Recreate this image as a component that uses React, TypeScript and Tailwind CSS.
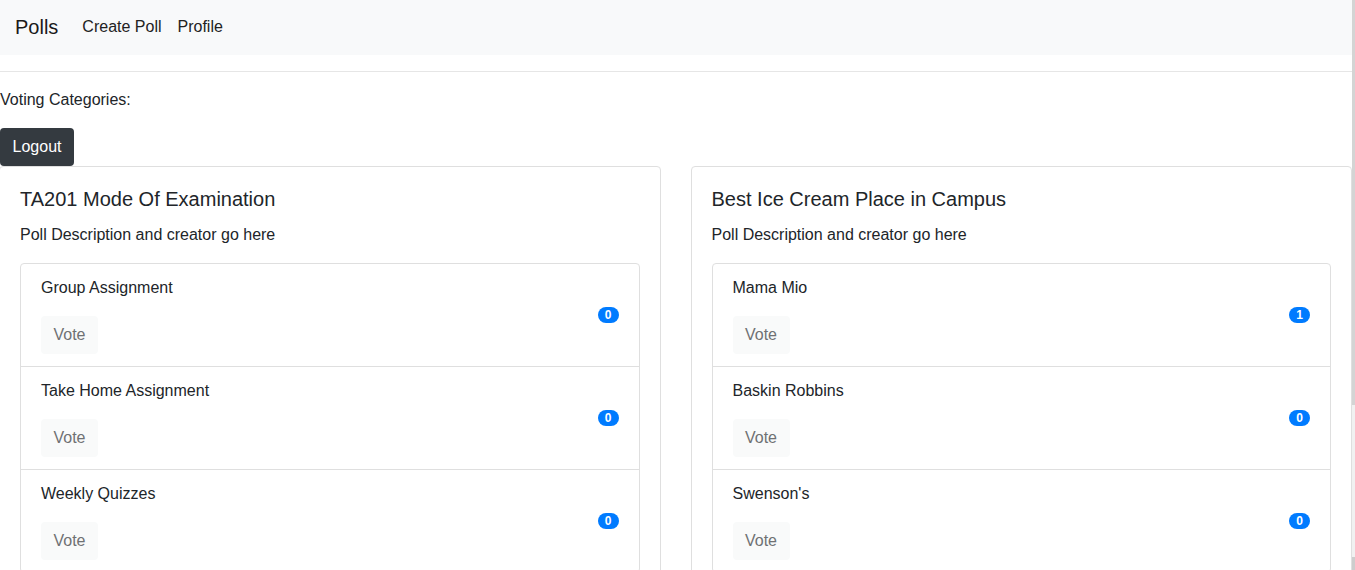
import React from 'react';

type Option = { id: string; name: string; votes: number };
type Poll = { id: string; title: string; description: string; options: Option[] };

const polls: Poll[] = [
  {
    id: '1',
    title: 'TA201 Mode Of Examination',
    description: 'Poll Description and creator go here',
    options: [
      { id: 'a', name: 'Group Assignment', votes: 0 },
      { id: 'b', name: 'Take Home Assignment', votes: 0 },
      { id: 'c', name: 'Weekly Quizzes', votes: 0 }
    ]
  },
  {
    id: '2',
    title: 'Best Ice Cream Place in Campus',
    description: 'Poll Description and creator go here',
    options: [
      { id: 'a', name: 'Mama Mio', votes: 1 },
      { id: 'b', name: 'Baskin Robbins', votes: 0 },
      { id: 'c', name: "Swenson's", votes: 0 }
    ]
  }
];

const PollCard: React.FC<{ poll: Poll }> = ({ poll }) => (
  <div className="border border-[#dfdfdf] rounded-[4px] bg-white">
    <div className="p-5">
      <h5 className="text-[20px] leading-[24px] font-medium mb-3 text-[#212529]">{poll.title}</h5>
      <p className="mb-4 leading-6">{poll.description}</p>
      <ul className="border border-[#dfdfdf] rounded-[4px]">
        {poll.options.map((opt, i) => (
          <li
            key={opt.id}
            className={`flex items-center justify-between px-5 py-3 ${i > 0 ? 'border-t border-[#dfdfdf]' : ''}`}
          >
            <div>
              <p className="leading-6 mb-4">{opt.name}</p>
              <button className="h-[38px] w-[57px] rounded-[4px] bg-[#f9fafa] text-[#6f7173] leading-6">
                Vote
              </button>
            </div>
            <span className="bg-[#007bff] text-white text-[12px] font-bold leading-none rounded-full px-[7px] py-[2px]">
              {opt.votes}
            </span>
          </li>
        ))}
      </ul>
    </div>
  </div>
);

const App: React.FC = () => {
  return (
    <div
      className="flex h-[570px] overflow-hidden bg-white text-[16px] text-[#212529]"
      style={{ fontFamily: '"Liberation Sans", Arial, sans-serif' }}
    >
      <div className="flex-1 min-w-0">
        {/* Navbar */}
        <nav className="h-[55px] bg-[#f8f9fa] flex items-center pl-[15px] pr-4 pb-[2px]">
          <span className="text-[20px] text-[#1a1a1a] mr-4">Polls</span>
          <a className="px-2 text-[#222]">Create Poll</a>
          <a className="px-2 text-[#222]">Profile</a>
        </nav>

        <hr className="my-4 border-t border-[#e6e6e6]" />

        <p className="leading-6 mb-4">Voting Categories:</p>

        <button className="h-[38px] w-[74px] rounded-[4px] bg-[#343a40] text-white leading-6">Logout</button>

        <div className="grid grid-cols-2 gap-[30px] ml-[-1px]">
          {polls.map((poll) => (
            <PollCard key={poll.id} poll={poll} />
          ))}
        </div>
      </div>

      {/* scrollbar strip */}
      <div className="w-[3px] bg-[#f1f1f1] flex flex-col">
        <div className="h-[405px] bg-[#d4d4d4]" />
        <div className="flex-1" />
        <div className="h-[13px] bg-[#cdcdcd]" />
      </div>
    </div>
  );
};

export default App;
